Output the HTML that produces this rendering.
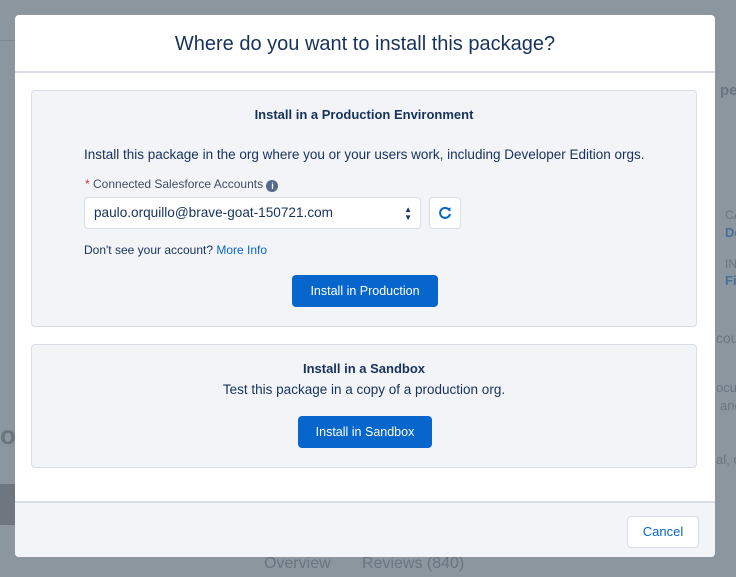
<!DOCTYPE html>
<html><head><meta charset="utf-8"><style>
*{box-sizing:border-box;margin:0;padding:0}
body{width:736px;height:577px;overflow:hidden;background:#8b969f;font-family:"Liberation Sans",sans-serif;position:relative;color:#16325c}
.bg{position:absolute;color:#6b7580;font-size:15px;white-space:nowrap}
.modal{position:absolute;left:15px;top:15px;width:700px;height:542px;background:#fff;border-radius:4px;overflow:hidden}
.hd{height:58px;border-bottom:2px solid #d8dde6;text-align:center;font-size:20px;font-weight:300;line-height:58px;color:#16325c}
.sec{position:absolute;left:16px;width:666px;background:#f3f4f8;border:1px solid #d8dde6;border-radius:4px;font-size:13px}
.t{font-weight:bold;text-align:center;font-size:13px}
.btn{position:absolute;background:#0766cc;color:#fff;border-radius:4px;text-align:center;font-size:12.5px;line-height:32px;height:32px}
.ft{position:absolute;left:0;top:486px;width:700px;height:56px;background:#f3f4f8;border-top:2px solid #d8dde6}
.cancel{position:absolute;right:16px;top:13px;width:72px;height:32px;border:1px solid #d8dde6;background:#fff;border-radius:4px;color:#0766cc;font-size:13px;text-align:center;line-height:30px}
</style></head><body>
<div class="bg" style="left:0;top:40px;width:15px;height:1px;background:#7c8790"></div>
<div class="bg" style="left:720px;top:82px;font-weight:bold;font-size:15px">per</div>
<div class="bg" style="left:725px;top:208px;font-size:12px">CA</div>
<div class="bg" style="left:725px;top:225px;font-weight:bold;color:#4a6f95;font-size:13px">De</div>
<div class="bg" style="left:725px;top:257px;font-size:12px">IN</div>
<div class="bg" style="left:725px;top:273px;font-weight:bold;color:#4a6f95;font-size:13px">Fi</div>
<div class="bg" style="left:716px;top:330px;font-size:14px">cou</div>
<div class="bg" style="left:716px;top:380px;font-size:13px">ocur</div>
<div class="bg" style="left:720px;top:398px;font-size:13px">and</div>
<div class="bg" style="left:716px;top:452px;font-size:13px">al, o</div>
<div class="bg" style="left:0;top:420px;font-size:26px;font-weight:bold">os</div>
<div style="position:absolute;left:0;top:484px;width:15px;height:41px;background:#6e777f"></div>
<div class="bg" style="left:264px;top:555px;font-size:16px">Overview</div>
<div class="bg" style="left:362px;top:555px;font-size:16px">Reviews (840)</div>
<div class="modal">
 <div class="hd">Where do you want to install this package?</div>
 <div class="sec" style="top:75px;height:237px">
  <div class="t" style="margin-top:16px">Install in a Production Environment</div>
  <div style="position:absolute;left:52px;top:56px;font-size:13.5px;white-space:nowrap">Install this package in the org where you or your users work, including Developer Edition orgs.</div>
  <div style="position:absolute;left:53px;top:86px;font-size:12px;color:#3e4d63"><span style="color:#c23934">*</span> Connected Salesforce Accounts <span style="display:inline-block;width:12px;height:12px;border-radius:50%;background:#54698d;color:#fff;font-size:9px;text-align:center;line-height:12px;font-weight:bold;vertical-align:-1px">i</span></div>
  <div style="position:absolute;left:52px;top:106px;width:337px;height:32px;background:#fff;border:1px solid #d8dde6;border-radius:4px;font-size:13.6px;line-height:30px;padding-left:9px;color:#16325c">paulo.orquillo@brave-goat-150721.com<span style="position:absolute;right:8px;top:0;font-size:8px;line-height:8px;padding-top:8px;color:#16325c">▲<br>▼</span></div>
  <div style="position:absolute;left:397px;top:106px;width:32px;height:32px;background:#fff;border:1px solid #d8dde6;border-radius:4px">
   <svg width="30" height="30" viewBox="0 0 30 30"><path d="M19.5 12.5 A5 5 0 1 0 20 16" fill="none" stroke="#0766cc" stroke-width="2"/><path d="M16.5 10.5 L20.5 9.5 L20.5 13.5 Z" fill="#0766cc"/></svg>
  </div>
  <div style="position:absolute;left:52px;top:152px;font-size:12px">Don't see your account? <span style="color:#0766cc">More Info</span></div>
  <div class="btn" style="left:260px;top:184px;width:146px">Install in Production</div>
 </div>
 <div class="sec" style="top:329px;height:124px">
  <div class="t" style="margin-top:16px">Install in a Sandbox</div>
  <div style="text-align:center;margin-top:6px;font-size:13.5px">Test this package in a copy of a production org.</div>
  <div class="btn" style="left:266px;top:71px;width:134px">Install in Sandbox</div>
 </div>
 <div class="ft"><div class="cancel">Cancel</div></div>
</div>
</body></html>
